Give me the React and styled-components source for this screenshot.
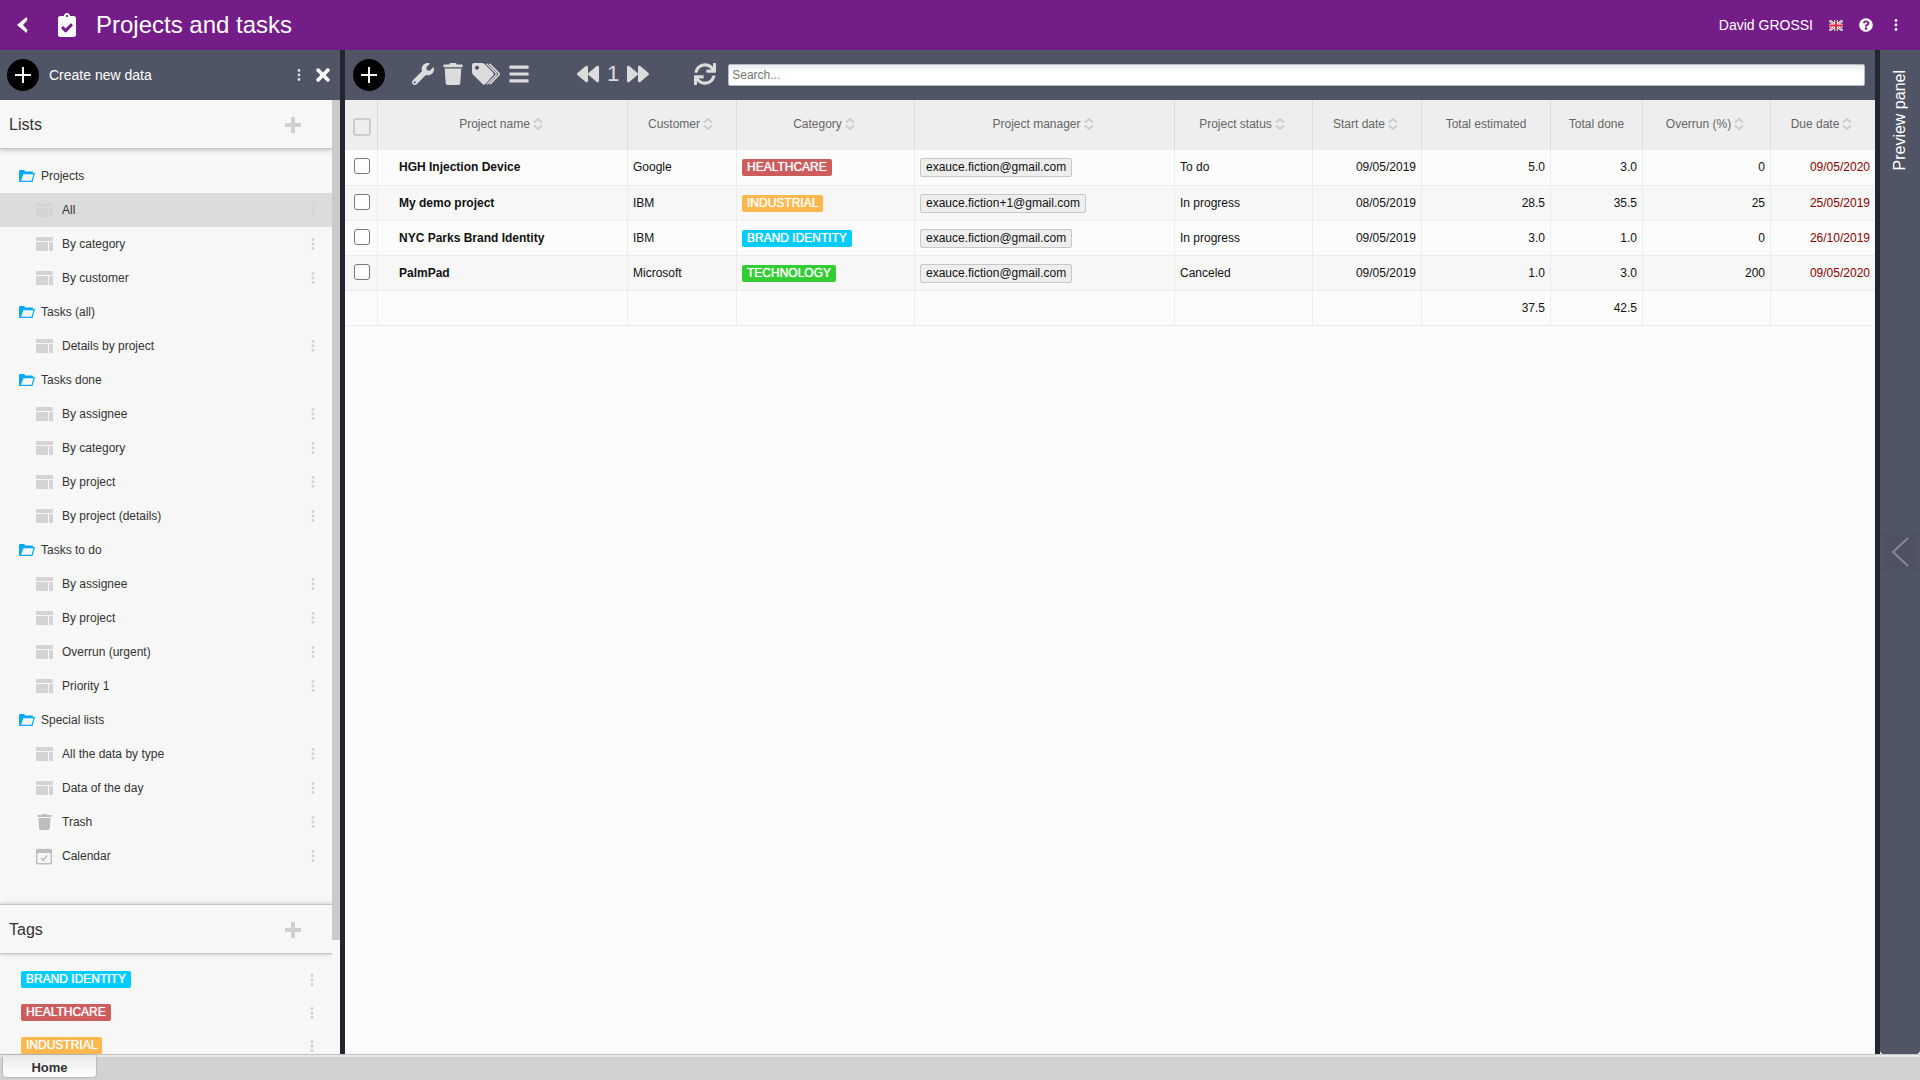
import React from "react";
import styled, { createGlobalStyle } from "styled-components";
import {
  FaBackward,
  FaBars,
  FaClipboardCheck,
  FaForward,
  FaQuestionCircle,
  FaSync,
  FaTimes,
  FaTrash,
  FaWrench,
} from "react-icons/fa";

const GlobalStyle = createGlobalStyle`
  * {
    box-sizing: border-box;
  }

  body {
    margin: 0;
    font-family: "Liberation Sans", Arial, sans-serif;
    font-size: 12px;
    color: #333;
  }

  button {
    display: flex;
    align-items: center;
    justify-content: center;
    padding: 0;
    border: 0;
    background: none;
    color: inherit;
    font: inherit;
    cursor: pointer;
  }
`;

const Page = styled.div`
  display: flex;
  flex-direction: column;
  height: 100vh;
  overflow: hidden;
`;

const Header = styled.header`
  display: flex;
  align-items: center;
  height: 50px;
  padding: 0 17px 0 16px;
  flex-shrink: 0;
  background: #741d88;
  color: #fff;
`;

const AppIcon = styled(FaClipboardCheck)`
  width: 18px;
  height: 24px;
  margin: 0 20px 0 30px;
`;

const Title = styled.h1`
  flex: 1;
  margin: 0;
  font-size: 24px;
  font-weight: normal;
`;

const HeaderTools = styled.div`
  display: flex;
  align-items: center;
  gap: 16px;
  font-size: 14px;
`;

const Body = styled.div`
  display: flex;
  flex: 1;
  min-height: 0;
`;

const Splitter = styled.div`
  width: 5px;
  flex-shrink: 0;
  background: #22262f;
`;

const Sidebar = styled.aside`
  display: flex;
  flex-direction: column;
  width: 340px;
  flex-shrink: 0;
  background: #f7f7f7;
`;

const Bar = styled.div`
  display: flex;
  align-items: center;
  height: 50px;
  flex-shrink: 0;
  background: #505566;
  color: #dcdcdc;
`;

const SidebarBar = styled(Bar)`
  gap: 10px;
  padding: 0 10px 0 7px;
`;

const BarLabel = styled.span`
  flex: 1;
  color: #fff;
  font-size: 14px;
`;

const AddButton = styled.button`
  width: 32px;
  height: 32px;
  flex-shrink: 0;
  border-radius: 50%;
  background: #000;
`;

const OptionsButton = styled.button`
  width: 14px;
  height: 20px;
`;

const CloseIcon = styled(FaTimes)`
  width: 14px;
  height: 20px;
  color: #fff;
`;

const ScrollArea = styled.div`
  display: flex;
  flex: 1;
  min-height: 0;
`;

const ScrollContent = styled.div`
  flex: 1;
  overflow: hidden;
`;

const ScrollTrack = styled.div`
  width: 8px;
`;

const ScrollThumb = styled.div`
  height: 88%;
  background: #cacaca;
`;

const SectionHeader = styled.div`
  display: flex;
  align-items: center;
  justify-content: space-between;
  height: ${(props) => (props.$lined ? 50 : 49)}px;
  padding: 1px 31px 0 9px;
  border-top: ${(props) => (props.$lined ? "1px solid #c6c6c6" : "0")};
  border-bottom: 1px solid #c6c6c6;
  box-shadow: ${(props) => (props.$lined ? "0 0 4px #bbb" : "0 2px 4px #ccc")};
`;

const SectionTitle = styled.h2`
  margin: 0;
  font-size: 16px;
  font-weight: normal;
`;

const Tree = styled.nav`
  padding: 10px 0 31px;
`;

const Folder = styled.div`
  display: flex;
  align-items: center;
  gap: 6px;
  height: 34px;
  padding-left: 19px;
`;

const TreeItem = styled.div`
  display: flex;
  align-items: center;
  justify-content: space-between;
  height: 34px;
  padding: 0 12px 0 36px;
  background: ${(props) => (props.$selected ? "#dcdcdc" : "transparent")};
  color: #d2d2d2;
`;

const TreeLink = styled.a`
  display: flex;
  align-items: center;
  gap: 9px;
  color: #333;
  text-decoration: none;

  svg {
    width: 17px;
    color: ${(props) => (props.$dark ? "#bdbdbd" : "#d4d4d4")};
  }
`;

const TagList = styled.div`
  padding-top: 9px;
`;

const TagRow = styled.div`
  display: flex;
  align-items: center;
  justify-content: space-between;
  height: 33px;
  padding: 0 13px 0 21px;
  color: #cecece;
`;

const Tag = styled.span`
  display: inline-block;
  padding: 0 5px;
  border-radius: 2px;
  background: ${(props) => props.$color};
  color: #fff;
  line-height: 17px;
  text-shadow: 0 0 1px #fff;
`;

const Main = styled.main`
  flex: 1;
  min-width: 0;
  background: #fcfcfc;
`;

const MainBar = styled(Bar)`
  padding: 0 10px 0 8px;
`;

const IconGroup = styled.div`
  display: flex;
  align-items: center;
  gap: 8px;
  padding-bottom: 2px;
  margin-left: ${(props) => props.$space}px;
  font-size: 22px;

  svg {
    width: auto;
    height: 22px;
  }
`;

const SearchInput = styled.input`
  flex: 1;
  min-width: 0;
  height: 22px;
  margin-left: 12px;
  padding: 0 3px;
  border: 1px solid #b4bccb;
  border-radius: 2px;
  background: linear-gradient(#ebeeee, #fff 8px);
  font-family: inherit;
  font-size: 12px;

  &::placeholder {
    color: #757575;
  }
`;

const Table = styled.table`
  width: 100%;
  table-layout: fixed;
  border-collapse: separate;
  border-spacing: 0;
  color: #111;
`;

const HeadCell = styled.th`
  height: 50px;
  padding: 0 0 3px;
  border-right: 1px solid #dcdcdc;
  background: #eee;
  color: #666;
  font-weight: normal;

  &:last-child {
    border-right: 0;
  }
`;

const SortButton = styled.button`
  margin: 0 auto;
  padding-right: 3px;
  gap: 3px;
`;

const Row = styled.tr`
  background: ${(props) => (props.$even ? "#f7f7f7" : "#fcfcfc")};
`;

const Cell = styled.td`
  height: ${(props) => (props.$first ? 36 : 35)}px;
  padding: 8px 5px 0;
  border-right: 1px solid #ececec;
  border-bottom: 1px solid #ececec;
  line-height: 19px;
  vertical-align: top;
  text-align: ${(props) => (props.$right ? "right" : "left")};
  color: ${(props) => (props.$late ? "#8b0000" : "inherit")};

  &:last-child {
    border-right: 0;
  }
`;

const CheckCell = styled(Cell)`
  padding: 8px 7px 0 9px;
`;

const NameCell = styled(Cell)`
  padding-left: 21px;
  font-weight: bold;
`;

const Checkbox = styled.input.attrs({ type: "checkbox" })`
  display: block;
  appearance: none;
  width: 16px;
  height: 16px;
  margin: 0;
  border: 1px solid #767676;
  border-radius: 3px;
  background: #fff;
`;

const HeadCheckbox = styled(Checkbox)`
  width: 18px;
  height: 18px;
  margin: 7px 0 0 8px;
  border: 2px solid #ccc;
  background: transparent;
`;

const Person = styled.span`
  display: inline-block;
  padding: 0 5px;
  border: 1px solid #c8c8c8;
  border-radius: 2px;
  background: #eee;
  line-height: 17px;
`;

const PreviewWrap = styled.aside`
  width: 40px;
  flex-shrink: 0;
  background: #fcfcfc;
`;

const Preview = styled.div`
  display: grid;
  grid-template-rows: 1fr auto 1fr;
  justify-items: center;
  height: 100%;
  border-radius: 0 0 4px 4px;
  background: #505566;
`;

const PreviewLabel = styled.span`
  align-self: start;
  padding-bottom: 20px;
  writing-mode: vertical-rl;
  transform: rotate(180deg);
  color: #fff;
  font-size: 16px;
  line-height: 20px;
`;

const PreviewToggle = styled.button`
  width: 38px;
  height: 38px;
  border: 1px solid #545560;
  background: #505162;
`;

const Footer = styled.footer`
  height: 26px;
  flex-shrink: 0;
  padding-left: 3px;
  border-top: 1px solid #c4c4c4;
  background: linear-gradient(#e8e8e8 2px, #d2d2d2 2px);
`;

const HomeTab = styled.button`
  width: 93px;
  height: 22px;
  padding-top: 2px;
  border-radius: 0 0 4px 4px;
  background: linear-gradient(#e8e8e8, #fff);
  box-shadow: 0 0 2px #888;
  font-size: 13px;
  font-weight: bold;
`;

const Plus = ({ size, weight, color }) => (
  <svg width={size} height={size} viewBox="0 0 16 16">
    <path d="M8 0v16M0 8h16" stroke={color} strokeWidth={weight} />
  </svg>
);

const Dots = () => (
  <svg width="4" height="12" viewBox="0 0 4 12" fill="currentColor">
    <circle cx="2" cy="1.5" r="1.4" />
    <circle cx="2" cy="6" r="1.4" />
    <circle cx="2" cy="10.5" r="1.4" />
  </svg>
);

const MoreButton = ({ label = "More" }) => (
  <OptionsButton aria-label={label}>
    <Dots />
  </OptionsButton>
);

const BackIcon = () => (
  <svg width="12" height="16" viewBox="0 0 12 16">
    <path d="M10.500 0L1 8l9.500 8 1-3L7 8l4.500-5z" fill="#fff" />
  </svg>
);

const FolderIcon = () => (
  <svg width="16" height="12" viewBox="0 0 16 12">
    <path
      d="M0 11V1q0-1 1-1h4l1.500 1.500H13q1 0 1 1V3h2l-2.500 9H1q-1 0-1-1zM4.500 4.200L2 10.800h10.500L14.500 4.200z"
      fill="#03a9f4"
      fillRule="evenodd"
    />
  </svg>
);

const ListIcon = () => (
  <svg width="17" height="14" viewBox="0 0 17 14" fill="currentColor">
    <path d="M0 0h17v4H0zM0 5h12v9H0zM13 5h4v9h-4z" />
  </svg>
);

const CalendarIcon = () => (
  <svg width="17" height="17" viewBox="0 0 17 17" fill="none">
    <rect x="0.700" y="2.200" width="14.600" height="13.600" rx="1" stroke="currentColor" strokeWidth="1.400" />
    <path d="M0 2q0-1 1-1h2v2h2V1h6v2h2V1h2q1 0 1 1v3H0z" fill="currentColor" />
    <path d="M4 0v2M12 0v2" stroke="currentColor" />
    <path d="M5 10l2.300 2.500L11 7.500" stroke="currentColor" strokeWidth="1.600" />
  </svg>
);

const TagsIcon = () => (
  <svg width="28" height="22" viewBox="0 0 28 22">
    <path
      d="M0 2Q0 0 2 0h8q1.500 0 2.500 1l8.500 8.500q1.500 1.500 0 3L13.500 21q-1.500 1.500-3 0L1 11.500Q0 10.500 0 9zM5 2.800a2 2 0 1 0 .01 0z"
      fill="currentColor"
      fillRule="evenodd"
    />
    <path
      d="M14.500.7l9.300 9q1.300 1.300 0 2.600l-8.600 9"
      stroke="currentColor"
      strokeWidth="1.300"
      fill="none"
    />
    <path
      d="M17.500.7l9 9q1.300 1.300 0 2.600l-8.600 9"
      stroke="currentColor"
      strokeWidth="1.600"
      fill="none"
    />
  </svg>
);

const SortIcon = () => (
  <svg width="10" height="12" viewBox="0 0 10 12" fill="none">
    <path
      d="M1 4.500L5 1l4 3.500M1 7.500L5 11l4-3.500"
      stroke="#cdcdcd"
      strokeWidth="2"
    />
  </svg>
);

const Flag = () => (
  <svg width="14" height="11" viewBox="0 0 14 11">
    <path d="M0 0h14v11H0z" fill="#2b3f8c" />
    <path d="M0 0l14 11M14 0L0 11" stroke="#fff" strokeWidth="2.400" />
    <path d="M0 0l14 11M14 0L0 11" stroke="#d8334a" strokeWidth="0.800" />
    <path d="M7 0v11M0 5.500h14" stroke="#fff" strokeWidth="3.400" />
    <path d="M7 0v11M0 5.500h14" stroke="#d8233a" strokeWidth="1.800" />
  </svg>
);

const folders = [
  { name: "Projects", items: ["All", "By category", "By customer"] },
  { name: "Tasks (all)", items: ["Details by project"] },
  {
    name: "Tasks done",
    items: ["By assignee", "By category", "By project", "By project (details)"],
  },
  {
    name: "Tasks to do",
    items: ["By assignee", "By project", "Overrun (urgent)", "Priority 1"],
  },
  {
    name: "Special lists",
    items: ["All the data by type", "Data of the day", "Trash", "Calendar"],
  },
];

const itemIcons = {
  Trash: <FaTrash size={16} />,
  Calendar: <CalendarIcon />,
};

const tagColors = {
  "BRAND IDENTITY": "#00ccff",
  HEALTHCARE: "#cd5c5c",
  INDUSTRIAL: "#ffb84d",
  TECHNOLOGY: "#32cd32",
};

const columns = [
  { label: "Project name", width: 250, sort: true },
  { label: "Customer", width: 109, sort: true },
  { label: "Category", width: 178, sort: true },
  { label: "Project manager", width: 260, sort: true },
  { label: "Project status", width: 138, sort: true },
  { label: "Start date", width: 109, sort: true },
  { label: "Total estimated", width: 129 },
  { label: "Total done", width: 92 },
  { label: "Overrun (%)", width: 128, sort: true },
  { label: "Due date", width: 104, sort: true },
];

const projects = [
  {
    name: "HGH Injection Device",
    customer: "Google",
    category: "HEALTHCARE",
    manager: "exauce.fiction@gmail.com",
    status: "To do",
    numbers: ["09/05/2019", "5.0", "3.0", "0"],
    due: "09/05/2020",
  },
  {
    name: "My demo project",
    customer: "IBM",
    category: "INDUSTRIAL",
    manager: "exauce.fiction+1@gmail.com",
    status: "In progress",
    numbers: ["08/05/2019", "28.5", "35.5", "25"],
    due: "25/05/2019",
  },
  {
    name: "NYC Parks Brand Identity",
    customer: "IBM",
    category: "BRAND IDENTITY",
    manager: "exauce.fiction@gmail.com",
    status: "In progress",
    numbers: ["09/05/2019", "3.0", "1.0", "0"],
    due: "26/10/2019",
  },
  {
    name: "PalmPad",
    customer: "Microsoft",
    category: "TECHNOLOGY",
    manager: "exauce.fiction@gmail.com",
    status: "Canceled",
    numbers: ["09/05/2019", "1.0", "3.0", "200"],
    due: "09/05/2020",
  },
];

const totals = ["", "", "", "", "", "", "", "37.5", "42.5", "", ""];

const SidePanel = () => (
  <Sidebar>
    <SidebarBar>
      <AddButton aria-label="Create new data">
        <Plus size={16} weight={2} color="#fff" />
      </AddButton>
      <BarLabel>Create new data</BarLabel>
      <MoreButton />
      <button aria-label="Close">
        <CloseIcon />
      </button>
    </SidebarBar>
    <ScrollArea>
      <ScrollContent>
        <SectionHeader>
          <SectionTitle>Lists</SectionTitle>
          <button aria-label="Add list">
            <Plus size={16} weight={4} color="#d0d0d0" />
          </button>
        </SectionHeader>
        <Tree>
          {folders.map((folder) => (
            <div key={folder.name}>
              <Folder>
                <FolderIcon />
                {folder.name}
              </Folder>
              {folder.items.map((item) => (
                <TreeItem key={item} $selected={item === "All"}>
                  <TreeLink href="#" $dark={item in itemIcons}>
                    {itemIcons[item] || <ListIcon />}
                    {item}
                  </TreeLink>
                  <MoreButton label={`${item} options`} />
                </TreeItem>
              ))}
            </div>
          ))}
        </Tree>
        <SectionHeader $lined>
          <SectionTitle>Tags</SectionTitle>
          <button aria-label="Add tag">
            <Plus size={16} weight={4} color="#d0d0d0" />
          </button>
        </SectionHeader>
        <TagList>
          {["BRAND IDENTITY", "HEALTHCARE", "INDUSTRIAL"].map((tag) => (
            <TagRow key={tag}>
              <Tag $color={tagColors[tag]}>{tag}</Tag>
              <MoreButton label={`${tag} options`} />
            </TagRow>
          ))}
        </TagList>
      </ScrollContent>
      <ScrollTrack>
        <ScrollThumb />
      </ScrollTrack>
    </ScrollArea>
  </Sidebar>
);

const Toolbar = () => (
  <MainBar>
    <AddButton aria-label="Add">
      <Plus size={16} weight={2} color="#fff" />
    </AddButton>
    <IconGroup $space={27}>
      <button aria-label="Settings">
        <FaWrench />
      </button>
      <button aria-label="Delete">
        <FaTrash />
      </button>
      <button aria-label="Tags">
        <TagsIcon />
      </button>
      <button aria-label="Menu">
        <FaBars />
      </button>
    </IconGroup>
    <IconGroup $space={47}>
      <button aria-label="Previous page">
        <FaBackward />
      </button>
      <span>1</span>
      <button aria-label="Next page">
        <FaForward />
      </button>
    </IconGroup>
    <IconGroup $space={45}>
      <button aria-label="Refresh">
        <FaSync />
      </button>
    </IconGroup>
    <SearchInput placeholder="Search..." aria-label="Search" />
  </MainBar>
);

const ProjectTable = () => (
  <Table>
    <colgroup>
      <col width="33" />
      {columns.map((column) => (
        <col key={column.label} width={column.width} />
      ))}
    </colgroup>
    <thead>
      <tr>
        <HeadCell>
          <HeadCheckbox aria-label="Select all" />
        </HeadCell>
        {columns.map((column) => (
          <HeadCell key={column.label}>
            {column.sort ? (
              <SortButton>
                {column.label}
                <SortIcon />
              </SortButton>
            ) : (
              column.label
            )}
          </HeadCell>
        ))}
      </tr>
    </thead>
    <tbody>
      {projects.map((project, index) => (
        <Row key={project.name} $even={index % 2 === 1}>
          <CheckCell $first={index === 0}>
            <Checkbox aria-label={`Select ${project.name}`} />
          </CheckCell>
          <NameCell>{project.name}</NameCell>
          <Cell>{project.customer}</Cell>
          <Cell>
            <Tag $color={tagColors[project.category]}>{project.category}</Tag>
          </Cell>
          <Cell>
            <Person>{project.manager}</Person>
          </Cell>
          <Cell>{project.status}</Cell>
          {project.numbers.map((value, i) => (
            <Cell key={i} $right>
              {value}
            </Cell>
          ))}
          <Cell $right $late>
            {project.due}
          </Cell>
        </Row>
      ))}
    </tbody>
    <tfoot>
      <Row>
        {totals.map((value, i) => (
          <Cell key={i} $right>
            {value}
          </Cell>
        ))}
      </Row>
    </tfoot>
  </Table>
);

const App = () => (
  <Page>
    <GlobalStyle />
    <Header>
      <button aria-label="Back">
        <BackIcon />
      </button>
      <AppIcon />
      <Title>Projects and tasks</Title>
      <HeaderTools>
        <span>David GROSSI</span>
        <Flag />
        <button aria-label="Help">
          <FaQuestionCircle />
        </button>
        <MoreButton />
      </HeaderTools>
    </Header>
    <Body>
      <SidePanel />
      <Splitter />
      <Main>
        <Toolbar />
        <ProjectTable />
      </Main>
      <Splitter />
      <PreviewWrap>
        <Preview>
          <PreviewLabel>Preview panel</PreviewLabel>
          <PreviewToggle aria-label="Open preview panel">
            <svg width="18" height="30" viewBox="0 0 18 30" fill="none">
              <path d="M17 1L2 15l15 14" stroke="#8a8a88" strokeWidth="2" />
            </svg>
          </PreviewToggle>
        </Preview>
      </PreviewWrap>
    </Body>
    <Footer>
      <HomeTab>Home</HomeTab>
    </Footer>
  </Page>
);

export default App;
